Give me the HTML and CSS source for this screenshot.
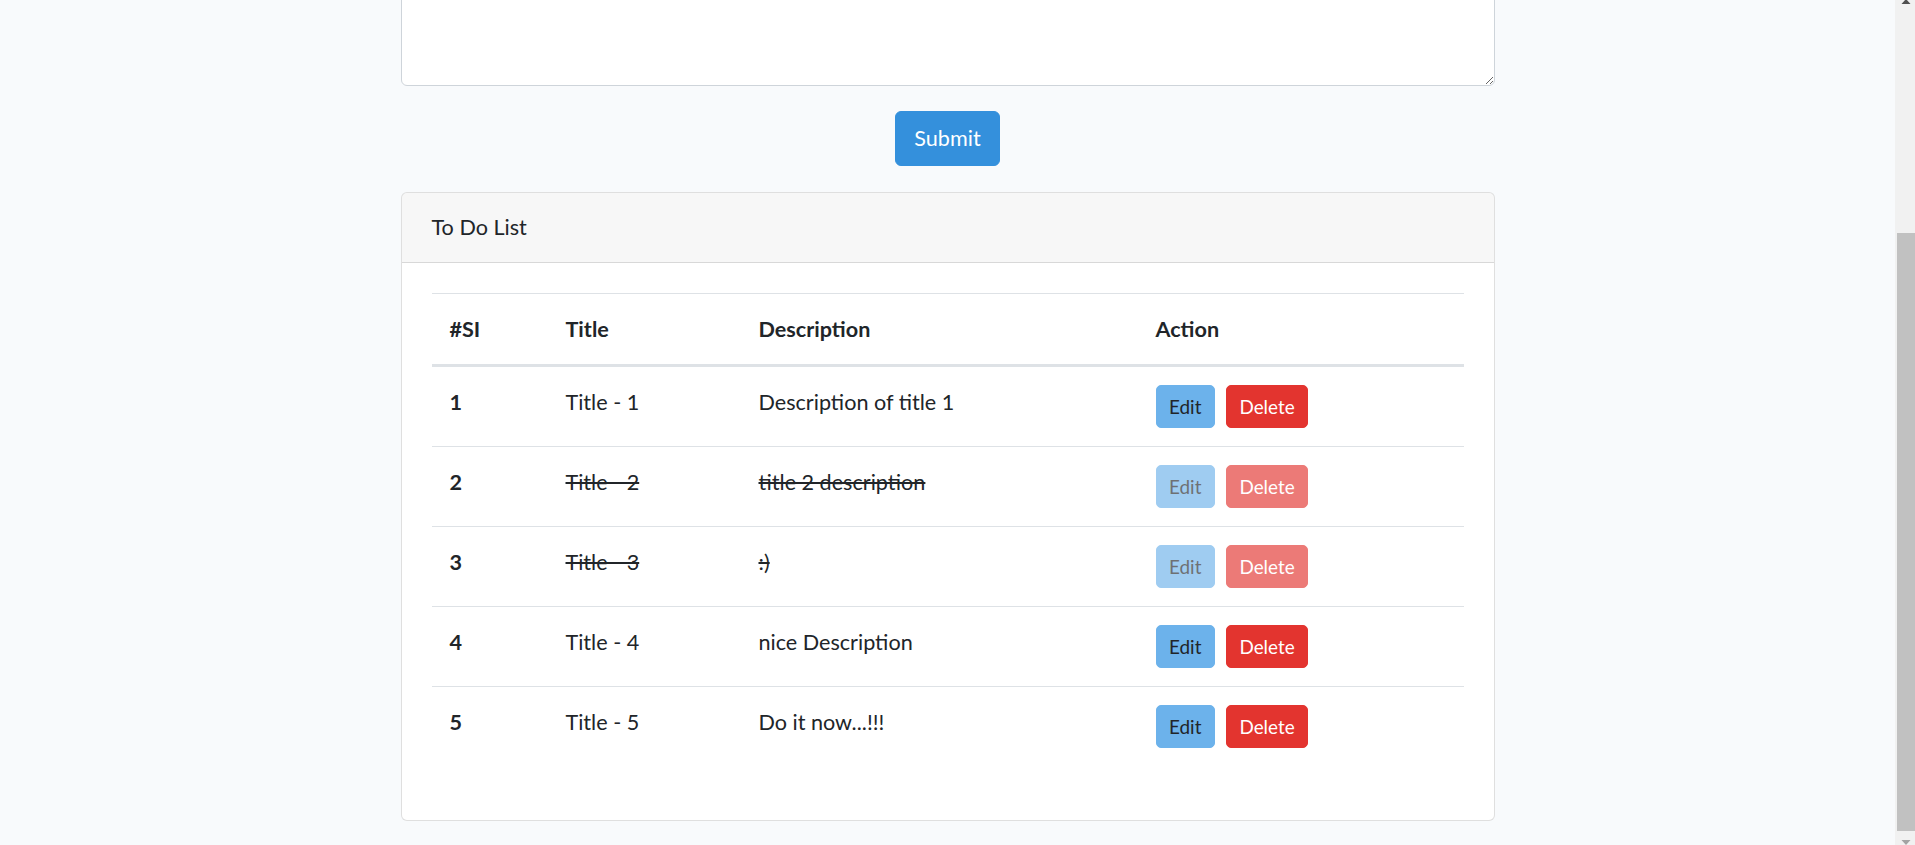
FILE: index.html
```html
<!DOCTYPE html>
<html lang="en">
<head>
<meta charset="utf-8">
<title>To Do List</title>
<link rel="stylesheet" href="styles.css">
</head>
<body>
<main class="main">
  <div class="container">
    <form class="todo-form">
      <textarea class="form-control" rows="3"></textarea>
      <div class="form-actions">
        <button type="button" class="btn btn-primary">Submit</button>
      </div>
    </form>

    <section class="card">
      <div class="card-header">To Do List</div>
      <div class="card-body">
        <table class="table">
          <colgroup>
            <col class="col-si">
            <col class="col-title">
            <col class="col-desc">
            <col class="col-action">
          </colgroup>
          <thead>
            <tr><th>#SI</th><th>Title</th><th>Description</th><th>Action</th></tr>
          </thead>
          <tbody>
            <tr>
              <th>1</th><td>Title - 1</td><td>Description of title 1</td>
              <td><div class="actions"><button type="button" class="btn btn-sm btn-info">Edit</button><button type="button" class="btn btn-sm btn-danger">Delete</button></div></td>
            </tr>
            <tr class="done">
              <th>2</th><td><span class="task-text">Title - 2</span></td><td><span class="task-text">title 2 description</span></td>
              <td><div class="actions"><button type="button" class="btn btn-sm btn-info" disabled>Edit</button><button type="button" class="btn btn-sm btn-danger" disabled>Delete</button></div></td>
            </tr>
            <tr class="done">
              <th>3</th><td><span class="task-text">Title - 3</span></td><td><span class="task-text">:)</span></td>
              <td><div class="actions"><button type="button" class="btn btn-sm btn-info" disabled>Edit</button><button type="button" class="btn btn-sm btn-danger" disabled>Delete</button></div></td>
            </tr>
            <tr>
              <th>4</th><td>Title - 4</td><td>nice Description</td>
              <td><div class="actions"><button type="button" class="btn btn-sm btn-info">Edit</button><button type="button" class="btn btn-sm btn-danger">Delete</button></div></td>
            </tr>
            <tr>
              <th>5</th><td>Title - 5</td><td>Do it now...!!!</td>
              <td><div class="actions"><button type="button" class="btn btn-sm btn-info">Edit</button><button type="button" class="btn btn-sm btn-danger">Delete</button></div></td>
            </tr>
          </tbody>
        </table>
      </div>
    </section>
  </div>
</main>
<div class="scrollbar" aria-hidden="true">
  <svg class="scrollbar-svg" width="20" height="845" viewBox="0 0 20 845">
    <polygon points="6.5,4 15.5,4 11,-1" fill="#505050"/>
    <rect x="2" y="233" width="18" height="598" fill="#c1c1c1"/>
    <polygon points="6.5,840 15.5,840 11,845" fill="#a3a3a3"/>
  </svg>
</div>
</body>
</html>
```

FILE: styles.css
```css
html, body {
  margin: 0;
  height: 845px;
  overflow: hidden;
}

body {
  display: flex;
  background: #f8fafc;
  font-family: Lato, "Open Sans", sans-serif;
  font-size: 21.6px;
  line-height: 1.6;
  color: #212529;
}

.main {
  flex: 1;
  min-width: 0;
}

.scrollbar {
  flex: none;
  width: 20px;
  background: #f1f1f1;
}

.scrollbar-svg {
  display: block;
}

.container {
  width: 1094px;
  margin: 0 auto;
}

.todo-form {
  margin-top: -38px;
}

.form-control {
  display: block;
  box-sizing: border-box;
  width: 100%;
  height: 124px;
  padding: 9px 18px;
  font: inherit;
  color: #495057;
  background: #fff;
  border: 1px solid #ced4da;
  border-radius: 6px;
}

.form-actions {
  display: flex;
  justify-content: center;
  padding: 25px 0 26px;
}

.btn {
  font-family: inherit;
  font-size: 21.6px;
  line-height: 34.56px;
  padding: 9px 18.5px;
  border: 1px solid transparent;
  border-radius: 6px;
  cursor: pointer;
}

.btn-primary {
  background: #3490dc;
  border-color: #3490dc;
  color: #fff;
}

.btn-sm {
  font-size: 18.9px;
  line-height: 29px;
  padding: 6px 12.5px;
  border-radius: 5px;
}

.btn-info {
  background: #6cb2eb;
  border-color: #6cb2eb;
  color: #212529;
}

.btn-danger {
  background: #e3342f;
  border-color: #e3342f;
  color: #fff;
}

.btn:disabled {
  opacity: 0.65;
  cursor: default;
}

.card {
  background: #fff;
  border: 1px solid rgba(0, 0, 0, 0.125);
  border-radius: 6px;
}

.card-header {
  padding: 17px 30px;
  line-height: 35px;
  background: rgba(0, 0, 0, 0.03);
  border-bottom: 1px solid rgba(0, 0, 0, 0.125);
  border-radius: 5px 5px 0 0;
}

.card-body {
  padding: 30px;
}

.table {
  width: 100%;
  table-layout: fixed;
  border-collapse: collapse;
  margin-bottom: 24px;
}

.col-si { width: 116px; }
.col-title { width: 193px; }
.col-desc { width: 397px; }
.col-action { width: auto; }

.table th,
.table td {
  padding: 18px;
  text-align: left;
  vertical-align: top;
  line-height: 34.56px;
  border-top: 1px solid #dee2e6;
}

.table th {
  font-weight: 700;
}

.table thead th {
  vertical-align: bottom;
  border-bottom: 3px solid #dee2e6;
}

.actions {
  display: flex;
  gap: 11px;
}

.done .task-text {
  text-decoration: line-through;
}
```
